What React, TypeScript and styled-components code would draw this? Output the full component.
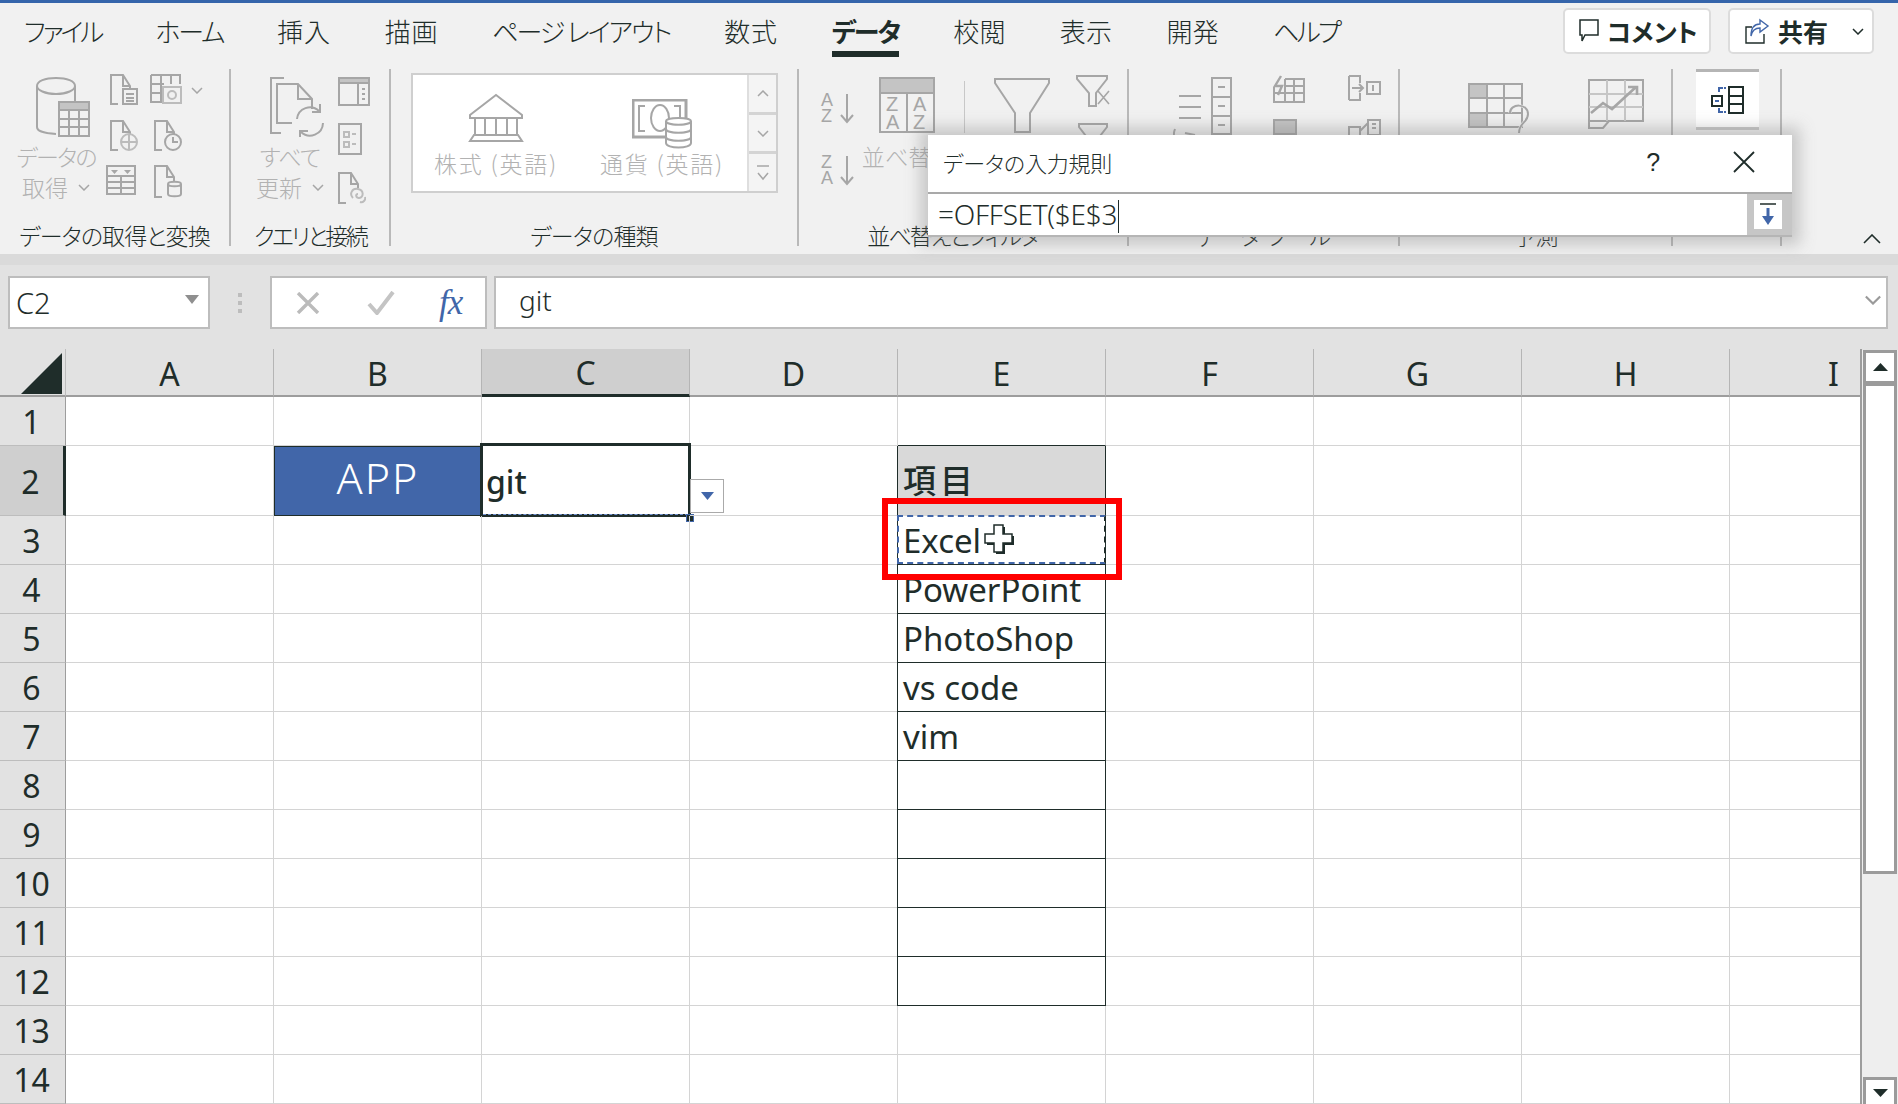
import React from "react";
import styled, { createGlobalStyle } from "styled-components";

const G = "#a6a6a6";
const DARK = "#1f2d2a";
const BLUE = "#4166a9";
const JP = `"Noto Sans CJK JP", "Noto Sans", sans-serif`;
const LATIN = `"Noto Sans", "Noto Sans CJK JP", sans-serif`;

const Global = createGlobalStyle`
  html, body { margin: 0; padding: 0; background: #fff; overflow: hidden; }
  #root { width: 1898px; height: 1104px; overflow: hidden; }
  * { box-sizing: border-box; }
`;

const Page = styled.div`
  position: relative;
  width: 1898px;
  height: 1104px;
  overflow: hidden;
  background: #e2e2e2;
  font-family: ${JP};
  font-feature-settings: "palt";
  color: ${DARK};
`;

const Ribbon = styled.header`
  height: 265px;
  background: #f1f1f1;
  border-top: 3px solid #3565ab;
  border-bottom: 11px solid #dadada;
`;

const TabRow = styled.nav`
  display: flex;
  align-items: flex-start;
  height: 66px;
  padding: 6px 24px 0 24px;
  gap: 54px;
`;

const Tab = styled.div<{ $active?: boolean; $ls: number }>`
  height: 48px;
  padding-top: 3px;
  line-height: 38px;
  font-size: 26px;
  letter-spacing: ${(p) => p.$ls}px;
  font-weight: ${(p) => (p.$active ? 700 : 300)};
  white-space: nowrap;
  border-bottom: 6px solid ${(p) => (p.$active ? DARK : "transparent")};
`;

const TabActions = styled.div`
  margin-left: auto;
  display: flex;
  gap: 17px;
  margin-top: -1px;
`;

const ActionButton = styled.button<{ $w: number }>`
  width: ${(p) => p.$w}px;
  height: 46px;
  display: flex;
  align-items: center;
  justify-content: flex-start;
  gap: 8px;
  background: #fff;
  border: 2px solid #dcdcdc;
  border-radius: 5px;
  font: 700 25px ${JP};
  font-feature-settings: "palt";
  color: ${DARK};
  padding: 0 0 0 14px;
`;

const ShareChevron = styled.span`
  margin-left: 16px;
`;

const Body = styled.div`
  display: flex;
  height: 185px;
`;

const Group = styled.section<{ $w: number }>`
  width: ${(p) => p.$w}px;
  height: 177px;
  border-right: 2px solid #b9b9b9;
  display: flex;
  flex-direction: column;
`;

const GroupContent = styled.div`
  display: flex;
  align-items: flex-start;
  height: 155px;
  overflow: hidden;
`;

const GroupLabel = styled.div<{ $ls?: number }>`
  height: 22px;
  line-height: 22px;
  text-align: center;
  font-size: 23px;
  font-weight: 300;
  letter-spacing: ${(p) => p.$ls ?? 0}px;
  white-space: nowrap;
`;

const Col = styled.div<{ $ml?: number; $w?: number; $pt?: number; $gap?: number; $center?: boolean }>`
  display: flex;
  flex-direction: column;
  flex: none;
  margin-left: ${(p) => p.$ml ?? 0}px;
  width: ${(p) => (p.$w ? `${p.$w}px` : "auto")};
  padding-top: ${(p) => p.$pt ?? 0}px;
  gap: ${(p) => p.$gap ?? 0}px;
  align-items: ${(p) => (p.$center ? "center" : "flex-start")};
`;

const BigIconSlot = styled.div`
  margin: 0 0 4px 14px;
`;

const InnerRule = styled.div`
  width: 1px;
  height: 52px;
  margin-top: 12px;
  background: #c8c8c8;
  flex: none;
`;

const FaintText = styled.div<{ $ls?: number; $mt?: number }>`
  color: #b2b2b2;
  font-size: 23px;
  font-weight: 300;
  line-height: 31px;
  letter-spacing: ${(p) => p.$ls ?? 0}px;
  margin-top: ${(p) => p.$mt ?? 0}px;
  white-space: nowrap;
  display: flex;
  align-items: center;
  gap: 10px;
`;

const SmallGrid = styled.div`
  display: grid;
  grid-template-columns: 44px 60px;
  grid-auto-rows: 45.5px;
  margin-left: 12px;
  padding-top: 5px;
`;

const SmallCell = styled.div<{ $in?: number }>`
  display: flex;
  align-items: flex-start;
  gap: 9px;
  padding-left: ${(p) => p.$in ?? 0}px;
`;

const LowChevron = styled.span`
  margin-top: 13px;
`;

const Gallery = styled.div`
  display: flex;
  width: 367px;
  height: 120px;
  margin: 4px 0 0 20px;
  background: #fff;
  border: 2px solid #cfcfcf;
`;

const GalleryItems = styled.div`
  display: flex;
  flex: 1;
`;

const GalleryItem = styled.div`
  width: 166px;
  display: flex;
  flex-direction: column;
  align-items: center;
`;

const GalleryIconSlot = styled.div<{ $pt: number }>`
  height: 70px;
  padding-top: ${(p) => p.$pt}px;
`;

const GalleryScroll = styled.div`
  width: 29px;
  display: flex;
  flex-direction: column;
  border-left: 2px solid #dedede;
`;

const GalleryArrow = styled.div`
  flex: 1;
  display: flex;
  align-items: center;
  justify-content: center;
  background: #f4f4f4;
  border-bottom: 3px solid #d4d4d4;
  &:last-child { border-bottom: 0; }
`;

const ActiveTool = styled.div`
  width: 63px;
  height: 61px;
  margin-left: 23px;
  background: #fff;
  border-top: 3px solid #b5b5b5;
  border-bottom: 3px solid #c8c8c8;
  display: flex;
  align-items: center;
  justify-content: center;
`;

const Collapse = styled.div`
  position: absolute;
  left: 1863px;
  top: 234px;
  line-height: 0;
`;

const Dialog = styled.div`
  position: absolute;
  left: 928px;
  top: 135px;
  width: 864px;
  height: 102px;
  background: #fff;
  box-shadow: 0 0 14px 8px rgba(120, 120, 120, 0.34);
  display: flex;
  flex-direction: column;
`;

const DialogHead = styled.div`
  height: 57px;
  display: flex;
  align-items: center;
  padding: 0 37px 3px 15px;
  font-size: 22px;
  font-weight: 300;
  letter-spacing: -0.2px;
`;

const DialogTitle = styled.div`
  flex: 1;
`;

const Help = styled.div`
  width: 20px;
  margin-right: 70px;
  text-align: center;
  font: 400 25px "Liberation Sans", sans-serif;
`;

const DialogInput = styled.div`
  flex: 1;
  display: flex;
  border-top: 2px solid #a9a9a9;
  border-bottom: 2px solid #b5b5b5;
`;

const InputText = styled.div`
  flex: 1;
  padding-left: 10px;
  font: 300 28px/41px ${LATIN};
  letter-spacing: -0.3px;
`;

const Caret = styled.span`
  display: inline-block;
  width: 1px;
  height: 33px;
  margin-left: 1px;
  background: ${DARK};
  vertical-align: -8px;
`;

const CollapseButton = styled.div`
  width: 45px;
  padding-right: 4px;
  background: #c6c6c6;
  display: flex;
  align-items: center;
  justify-content: center;
`;

const CollapseInner = styled.div`
  width: 28px;
  height: 29px;
  background: #fff;
  display: flex;
  align-items: center;
  justify-content: center;
`;

const FormulaBar = styled.div`
  display: flex;
  height: 84px;
  padding: 11px 10px 0 8px;
`;

const BarBox = styled.div`
  height: 53px;
  background: #fff;
  border: 2px solid #bdbdbd;
  display: flex;
  align-items: center;
`;

const NameBox = styled(BarBox)`
  width: 202px;
  padding: 0 14px 0 6px;
  justify-content: space-between;
  font: 300 29px ${LATIN};
`;

const NameArrow = styled.span`
  margin: -6px -5px 0 0;
`;

const Grip = styled.div`
  width: 60px;
  height: 53px;
  display: flex;
  align-items: center;
  justify-content: center;
`;

const FxBox = styled(BarBox)`
  width: 217px;
  margin-right: 7px;
  padding-left: 24px;
  gap: 47px;
`;

const Fx = styled.span`
  margin-left: -3px;
  color: ${BLUE};
  font: italic 400 35px "Liberation Serif", serif;
  letter-spacing: -1px;
`;

const FormulaBox = styled(BarBox)`
  flex: 1;
  padding: 0 4px 5px 23px;
  justify-content: space-between;
  font: 300 28px ${LATIN};
`;

const SheetArea = styled.div`
  display: flex;
  height: 755px;
`;

const Sheet = styled.div`
  width: 1862px;
  overflow: hidden;
  border-right: 2px solid #9d9d9d;
  display: grid;
  grid-template-columns: 66px repeat(9, 208px);
  grid-template-rows: 48px 49px 70px repeat(12, 49px);
  background: #fff;
`;

const Corner = styled.div`
  background: #e2e2e2;
  border-bottom: 2px solid #9d9d9d;
  border-right: 1px solid #bdbdbd;
  display: flex;
  align-items: flex-end;
  justify-content: flex-end;
  padding: 0 3px 1px 0;
`;

const ColHead = styled.div<{ $sel?: boolean }>`
  display: flex;
  align-items: center;
  justify-content: center;
  background: ${(p) => (p.$sel ? "#cfcfcf" : "#e2e2e2")};
  border-right: 1px solid #b5b5b5;
  border-bottom: ${(p) => (p.$sel ? `3px solid ${DARK}` : "2px solid #9d9d9d")};
  font: 400 32px ${LATIN};
  padding-top: 2px;
`;

const RowHead = styled.div<{ $sel?: boolean }>`
  display: flex;
  align-items: center;
  justify-content: center;
  background: ${(p) => (p.$sel ? "#cfcfcf" : "#e2e2e2")};
  border-right: ${(p) => (p.$sel ? `3px solid ${DARK}` : "1px solid #9d9d9d")};
  border-bottom: 1px solid #bdbdbd;
  font: 400 32px ${LATIN};
  padding: 1px 2px 0 0;
`;

const Cell = styled.div`
  position: relative;
  border-right: 1px solid #d4d4d4;
  border-bottom: 1px solid #d4d4d4;
`;

const TableCell = styled(Cell)<{ $head?: boolean }>`
  display: flex;
  align-items: center;
  margin-left: -1px;
  padding-left: 5px;
  padding-bottom: ${(p) => (p.$head ? 4 : 0)}px;
  background: ${(p) => (p.$head ? "#d9d9d9" : "#fff")};
  border-left: 1px solid ${DARK};
  border-right: 1px solid ${DARK};
  border-bottom: 1px solid ${(p) => (p.$head ? "#d9d9d9" : DARK)};
  font: ${(p) => (p.$head ? `500 33px ${JP}` : `400 33px ${LATIN}`)};
  letter-spacing: ${(p) => (p.$head ? "4px" : "0")};
`;

const TopEdgeCell = styled(Cell)`
  border-bottom: 1px solid ${DARK};
`;

const AppCell = styled(Cell)`
  display: flex;
  align-items: center;
  justify-content: center;
  background: ${BLUE};
  border: 1px solid ${DARK};
  color: #fff;
  font: 300 43px ${LATIN};
  letter-spacing: 2px;
  padding-bottom: 8px;
`;

const ActiveCell = styled(Cell)`
  display: flex;
  align-items: center;
  padding-left: 4px;
  padding-top: 2px;
  font: 500 32px ${LATIN};
`;

const Selection = styled.div`
  position: absolute;
  left: -2px;
  top: -3px;
  width: 211px;
  height: 74px;
  border: 3px solid ${DARK};
  pointer-events: none;
  &::after {
    content: "";
    position: absolute;
    left: 0;
    right: 0;
    bottom: -1px;
    border-top: 1px dashed #6f8fd0;
  }
`;

const Handle = styled.div`
  position: absolute;
  left: 204px;
  top: 68px;
  width: 8px;
  height: 8px;
  background: ${DARK};
  border: 1px solid ${BLUE};
`;

const DropButton = styled.div`
  position: absolute;
  left: 208px;
  top: 33px;
  width: 34px;
  height: 34px;
  background: #fff;
  border: 1px solid #aaa;
  display: flex;
  align-items: center;
  justify-content: center;
`;

const Ants = styled.div`
  position: absolute;
  inset: -1px -1px 0 -1px;
  border: 2px dashed ${BLUE};
  border-right-color: ${DARK};
`;

const RedBox = styled.div`
  position: absolute;
  left: -16px;
  top: -18px;
  width: 240px;
  height: 82px;
  border: 6px solid #ff0000;
  z-index: 3;
`;

const Pointer = styled.div`
  position: absolute;
  left: 86px;
  top: 8px;
  line-height: 0;
  z-index: 4;
`;

const ScrollBar = styled.aside`
  width: 36px;
  padding: 1px 0 0 1px;
  display: flex;
  flex-direction: column;
  background: linear-gradient(#e2e2e2 0 1px, #eeeeee 1px);
`;

const ScrollButton = styled.div`
  width: 34px;
  height: 34px;
  flex: none;
  background: #fff;
  border: 3px solid #9b9b9b;
  display: flex;
  align-items: center;
  justify-content: center;
`;

const ScrollThumb = styled.div`
  width: 34px;
  height: 491px;
  flex: none;
  margin-top: -1px;
  background: #fff;
  border: 3px solid #9b9b9b;
`;

const ScrollEnd = styled(ScrollButton)`
  margin-top: auto;
  height: 28px;
  margin-bottom: -1px;
  border-bottom: 0;
`;

/* ---------- icons ---------- */
type S = { w: number; h: number; children: React.ReactNode };
const Ico = ({ w, h, children }: S) => (
  <svg width={w} height={h} viewBox={`0 0 ${w} ${h}`} fill="none" stroke={G} strokeWidth={2} style={{ display: "block", flex: "none" }}>
    {children}
  </svg>
);

const Doc = ({ children, w = 28, h = 31 }: { children?: React.ReactNode; w?: number; h?: number }) => (
  <Ico w={w} h={h}>
    <path d={`M8 ${h - 1}H1V1H13L${w - 8} 12V${Math.min(h - 8, 16)}M13 1V12H${w - 8}`} />
    {children}
  </Ico>
);

const CylinderTable = () => (
  <Ico w={54} h={60}>
    <path d="M1 9C1 4 9 1 20 1S39 4 39 9V24M1 9V50C1 54 6 56 20 57M1 9C1 13 9 17 20 17S39 13 39 9" />
    <rect x="23" y="25" width="30" height="34" fill="#f1f1f1" />
    <rect x="23" y="25" width="30" height="8" fill="#c4c4c4" />
    <path d="M23 42H53M23 50H53M33 33V59M43 33V59" />
  </Ico>
);

const DocLines = () => (
  <Doc>
    <rect x="13" y="15" width="14" height="15" fill="#f1f1f1" />
    <path d="M16 20H24M16 24H24M16 27H24" />
  </Doc>
);

const TableCamera = () => (
  <Ico w={32} h={30}>
    <path d="M1 1H30V10M1 1V28H12M1 10H14M1 19H12M11 1V28M21 1V10" />
    <rect x="13" y="13" width="18" height="16" fill="#f1f1f1" stroke="#bcbcbc" />
    <circle cx="22" cy="21" r="4" stroke="#bcbcbc" />
  </Ico>
);

const Chevron = ({ w = 12, h = 7, c = G }: { w?: number; h?: number; c?: string }) => (
  <svg width={w} height={h} viewBox="0 0 12 7" fill="none" stroke={c} strokeWidth={1.5} style={{ display: "block", flex: "none" }}>
    <path d="M1 1L6 6L11 1" />
  </svg>
);

const DocGlobe = () => (
  <Doc>
    <circle cx="19" cy="22" r="8" fill="#f1f1f1" stroke="#bcbcbc" />
    <path d="M11 22H27M19 14V30" stroke="#bcbcbc" />
  </Doc>
);

const DocClock = () => (
  <Doc>
    <circle cx="19" cy="22" r="8" fill="#f1f1f1" />
    <path d="M19 17V22H24" />
  </Doc>
);

const TableFilter = () => (
  <Ico w={30} h={30}>
    <rect x="1" y="1" width="28" height="28" />
    <path d="M1 11H29M1 17H29M1 23H29M15 11V29" />
    <path d="M5 5H12L8.5 9ZM18 5H25L21.5 9Z" fill={G} stroke="none" />
  </Ico>
);

const DocCylinder = () => (
  <Doc h={33}>
    <path d="M14 19C14 16 27 16 27 19V29C27 32 14 32 14 29ZM14 19C14 22 27 22 27 19" fill="#f1f1f1" />
  </Doc>
);

const RefreshAll = () => (
  <Ico w={54} h={60}>
    <path d="M14 1H1V56H11" />
    <path d="M22 46H7V7H28L42 22V32M28 7V22H42" />
    <path d="M27 42A13 13 0 0 1 49 34M53 46A13 13 0 0 1 31 55" />
    <path d="M50 27V35H42M30 62V54H38" />
  </Ico>
);

const PanelTall = () => (
  <Ico w={32} h={29}>
    <rect x="1" y="1" width="30" height="27" />
    <rect x="1" y="1" width="30" height="5" fill="#c4c4c4" />
    <path d="M20 6V28M24 12H27M24 17H27M24 22H27" />
  </Ico>
);

const PanelList = () => (
  <Ico w={24} h={32}>
    <rect x="1" y="1" width="22" height="30" />
    <rect x="6" y="9" width="5" height="5" stroke="#bcbcbc" />
    <rect x="6" y="19" width="5" height="5" stroke="#bcbcbc" />
    <path d="M14 11H18M14 21H18" stroke="#bcbcbc" />
  </Ico>
);

const DocLink = () => (
  <Doc h={32}>
    <path d="M15 26C11 22 14 16 20 17C26 18 26 25 21 26C18 26 17 22 20 22M22 30C25 31 28 28 27 25" fill="none" stroke="#bcbcbc" />
  </Doc>
);

const Bank = () => (
  <Ico w={56} h={50}>
    <path d="M2 22L28 2L54 22V25H2Z" />
    <path d="M7 25V42M17 25V42M28 25V42M39 25V42M49 25V42" />
    <path d="M6 42H50L54 48H2Z" />
  </Ico>
);

const Currency = () => (
  <Ico w={60} h={50}>
    <rect x="1" y="1" width="53" height="37" strokeWidth={3} />
    <path d="M13 7H7V32H13M42 7H48V32H42" />
    <ellipse cx="28" cy="19" rx="9" ry="13" />
    <path d="M34 22C34 18 59 18 59 22V44C59 50 34 50 34 44Z" fill="#fff" />
    <path d="M34 22C34 27 59 27 59 22M34 30C34 35 59 35 59 30M34 38C34 43 59 43 59 38" />
  </Ico>
);

/* Two letters stacked beside an arrow, as the sort buttons draw them. */
const SortLetters = styled.div`
  display: flex;
  flex-direction: column;
  width: 16px;
  font: 400 18px/16px "Liberation Sans", sans-serif;
  color: ${G};
`;

const SortLetter = styled.div`
  height: 16px;
  line-height: 16px;
`;

const SortButton = styled.div`
  display: flex;
  align-items: flex-start;
  gap: 2px;
`;

const Sort = ({ top, bot }: { top: string; bot: string }) => (
  <SortButton>
    <SortLetters><SortLetter>{top}</SortLetter><SortLetter>{bot}</SortLetter></SortLetters>
    <Ico w={16} h={32}>
      <path d="M8 2V29M2 23L8 30L14 23" />
    </Ico>
  </SortButton>
);

const SortBig = () => (
  <Ico w={56} h={56}>
    <rect x="1" y="1" width="54" height="54" strokeWidth={2} />
    <rect x="1" y="1" width="54" height="15" fill="#c4c4c4" />
    <path d="M28 16V55" />
    <text x="7" y="34" fontSize="20" fontFamily="Liberation Sans" fill={G} stroke="none">Z</text>
    <text x="7" y="52" fontSize="20" fontFamily="Liberation Sans" fill={G} stroke="none">A</text>
    <text x="34" y="34" fontSize="20" fontFamily="Liberation Sans" fill={G} stroke="none">A</text>
    <text x="34" y="52" fontSize="20" fontFamily="Liberation Sans" fill={G} stroke="none">Z</text>
  </Ico>
);

const Funnel = () => (
  <Ico w={56} h={56}>
    <path d="M1 2H55V6L36 36V55H21V36L1 6Z" />
  </Ico>
);

const ClearFilter = () => (
  <Ico w={34} h={32}>
    <path d="M1 1H31V4L20 18V31H13V18L1 4Z" />
    <path d="M22 16L33 29M33 16L22 29" strokeWidth={1.6} />
  </Ico>
);

const Reapply = () => (
  <Ico w={34} h={14}>
    <path d="M3 1H31V4L24 13H10L3 4Z" />
  </Ico>
);

const TextColumns = () => (
  <Ico w={60} h={58}>
    <path d="M6 19H28M6 30H28M6 41H28" />
    <rect x="39" y="1" width="19" height="56" />
    <path d="M39 20H58M39 39H58" />
    <path d="M45 10H52M45 29H52M45 48H52" />
    <path d="M2 52C-2 62 6 70 16 70M12 56L22 58" />
  </Ico>
);

const FlashFill = () => (
  <Ico w={32} h={28}>
    <path d="M12 4H31V27H1V12M1 18H31M12 4V27M21 4V27M12 11H31" />
    <path d="M8 1L2 11H9L5 20" strokeWidth={2.4} />
  </Ico>
);

const DupRemove = () => (
  <Ico w={24} h={16}>
    <rect x="1" y="1" width="22" height="30" />
    <rect x="1" y="1" width="22" height="14" fill="#c4c4c4" />
  </Ico>
);

const ConsolidateTop = () => (
  <Ico w={33} h={26}>
    <path d="M1 1H12V8M1 25H12V18M1 1V25" />
    <path d="M4 13H15M11 9L15 13L11 17" />
    <rect x="19" y="7" width="13" height="12" />
    <path d="M25 10V16" />
  </Ico>
);

const ConsolidateBottom = () => (
  <Ico w={33} h={17}>
    <rect x="20" y="1" width="12" height="15" />
    <rect x="1" y="8" width="11" height="9" />
    <path d="M12 12L20 4M24 5H28M24 9H28" />
  </Ico>
);

const WhatIf = () => (
  <Ico w={62} h={60}>
    <rect x="1" y="1" width="53" height="43" />
    <rect x="1" y="1" width="18" height="14" fill="#c4c4c4" />
    <rect x="1" y="30" width="18" height="14" fill="#c4c4c4" />
    <path d="M19 1V44M36 1V44M1 15H54M1 30H54" />
    <path d="M42 30C42 20 60 20 60 31C60 40 51 39 51 50M51 54V59" strokeWidth={3} stroke="#f1f1f1" />
    <path d="M42 30C42 20 60 20 60 31C60 40 51 39 51 50M51 54V59" />
  </Ico>
);

const Forecast = () => (
  <Ico w={56} h={50}>
    <rect x="1" y="1" width="54" height="41" />
    <path d="M1 15H55M1 28H55M19 1V42M37 1V42" stroke="#c6c6c6" />
    <path d="M3 34L15 24L24 30L48 8M40 8H49V16" strokeWidth={2.6} />
    <path d="M1 42V49H15L21 42" />
  </Ico>
);

const OutlineIcon = () => (
  <svg width="34" height="28" viewBox="0 0 34 28" fill="none" strokeWidth={2} style={{ display: "block" }}>
    <path d="M12 2H8V6M12 26H8V22" stroke={BLUE} />
    <rect x="1" y="10" width="10" height="10" stroke={DARK} />
    <path d="M4 15H8" stroke={BLUE} />
    <rect x="18" y="1" width="14" height="26" stroke={DARK} />
    <path d="M18 10H32M18 18H32" stroke={DARK} />
    <path d="M13 2H15M13 26H15" stroke={BLUE} />
  </svg>
);

const CommentIcon = () => (
  <svg width="20" height="24" viewBox="0 0 20 24" fill="none" stroke={DARK} strokeWidth={1.5} style={{ display: "block" }}>
    <path d="M1 1H19V16H6L3 22V16H1Z" />
  </svg>
);

const ShareIcon = () => (
  <svg width="26" height="28" viewBox="0 0 26 28" fill="none" stroke={DARK} strokeWidth={1.4} style={{ display: "block" }}>
    <path d="M8 10H2V26H20V17" />
    <path d="M16 3L24 9L16 15V11C11 11 8 14 7 19C7 11 10 7 16 7Z" stroke={BLUE} />
  </svg>
);

const Tri = ({ w, h, c, up }: { w: number; h: number; c: string; up?: boolean }) => (
  <svg width={w} height={h} viewBox={`0 0 ${w} ${h}`} style={{ display: "block", flex: "none" }}>
    <path d={up ? `M0 ${h}H${w}L${w / 2} 0Z` : `M0 0H${w}L${w / 2} ${h}Z`} fill={c} />
  </svg>
);

/* ---------- data ---------- */
const tabs: { t: string; ls: number }[] = [
  { t: "ファイル", ls: -3.2 },
  { t: "ホーム", ls: -2.1 },
  { t: "挿入", ls: 0.7 },
  { t: "描画", ls: 0.7 },
  { t: "ページ レイアウト", ls: -2 },
  { t: "数式", ls: 0.7 },
  { t: "データ", ls: -2 },
  { t: "校閲", ls: 0.3 },
  { t: "表示", ls: 0.3 },
  { t: "開発", ls: 0.3 },
  { t: "ヘルプ", ls: -2.9 },
];
const cols = ["A", "B", "C", "D", "E", "F", "G", "H", "I"];
const rows = Array.from({ length: 14 }, (_, i) => i + 1);
const tableText: Record<number, string> = { 3: "Excel", 4: "PowerPoint", 5: "PhotoShop", 6: "vs code", 7: "vim" };

const renderCell = (r: number, c: string) => {
  const key = `${c}${r}`;
  if (key === "B2") return <AppCell key={key}>APP</AppCell>;
  if (key === "C2")
    return (
      <ActiveCell key={key}>
        git
        <Selection />
        <Handle />
        <DropButton><Tri w={13} h={8} c={BLUE} /></DropButton>
      </ActiveCell>
    );
  if (key === "E1") return <TopEdgeCell key={key} />;
  if (key === "E2") return <TableCell key={key} $head>項目</TableCell>;
  if (c === "E" && r >= 3 && r <= 12)
    return (
      <TableCell key={key}>
        {tableText[r]}
        {r === 3 && (
          <>
            <Ants />
            <RedBox />
            <Pointer>
              <svg width="32" height="32" viewBox="0 0 32 32">
                <path d="M12 3H21V12H30V21H21V30H12V21H3V12H12Z" fill={DARK} />
                <path d="M10 1H19V10H28V19H19V28H10V19H1V10H10Z" fill="#fff" stroke={DARK} strokeWidth={1.5} />
              </svg>
            </Pointer>
          </>
        )}
      </TableCell>
    );
  return <Cell key={key} />;
};

export default function App() {
  return (
    <Page>
      <Global />
      <Ribbon>
        <TabRow>
          {tabs.map(({ t, ls }) => (
            <Tab key={t} $ls={ls} $active={t === "データ"}>{t}</Tab>
          ))}
          <TabActions>
            <ActionButton $w={148}><CommentIcon />コメント</ActionButton>
            <ActionButton $w={146}><ShareIcon />共有<ShareChevron><Chevron c={DARK} /></ShareChevron></ActionButton>
          </TabActions>
        </TabRow>
        <Body>
          <Group $w={231}>
            <GroupContent>
              <Col $ml={18} $w={76} $pt={8} $center>
                <BigIconSlot><CylinderTable /></BigIconSlot>
                <FaintText $ls={-1.8}>データの</FaintText>
                <FaintText>取得<Chevron /></FaintText>
              </Col>
              <SmallGrid>
                <SmallCell $in={4}><DocLines /></SmallCell>
                <SmallCell><TableCamera /><LowChevron><Chevron /></LowChevron></SmallCell>
                <SmallCell $in={4}><DocGlobe /></SmallCell>
                <SmallCell $in={4}><DocClock /></SmallCell>
                <SmallCell><TableFilter /></SmallCell>
                <SmallCell $in={4}><DocCylinder /></SmallCell>
              </SmallGrid>
            </GroupContent>
            <GroupLabel $ls={-0.9}>データの取得と変換</GroupLabel>
          </Group>
          <Group $w={160}>
            <GroupContent>
              <Col $ml={24} $w={70} $pt={8} $center>
                <BigIconSlot><RefreshAll /></BigIconSlot>
                <FaintText $ls={-0.8}>すべて</FaintText>
                <FaintText>更新<Chevron /></FaintText>
              </Col>
              <Col $ml={13} $pt={8} $gap={17}>
                <PanelTall />
                <PanelList />
                <DocLink />
              </Col>
            </GroupContent>
            <GroupLabel $ls={-2.6}>クエリと接続</GroupLabel>
          </Group>
          <Group $w={408}>
            <GroupContent>
              <Gallery>
                <GalleryItems>
                  <GalleryItem>
                    <GalleryIconSlot $pt={18}><Bank /></GalleryIconSlot>
                    <FaintText $ls={1.8} $mt={3}>株式 (英語)</FaintText>
                  </GalleryItem>
                  <GalleryItem>
                    <GalleryIconSlot $pt={24}><Currency /></GalleryIconSlot>
                    <FaintText $ls={1.8} $mt={3}>通貨 (英語)</FaintText>
                  </GalleryItem>
                </GalleryItems>
                <GalleryScroll>
                  <GalleryArrow><svg width="12" height="7" viewBox="0 0 12 7" fill="none" stroke={G} strokeWidth={1.5}><path d="M1 6L6 1L11 6" /></svg></GalleryArrow>
                  <GalleryArrow><Chevron /></GalleryArrow>
                  <GalleryArrow>
                    <svg width="12" height="17" viewBox="0 0 12 17" fill="none" stroke={G} strokeWidth={1.5}><path d="M0 2H12M1 9L6 15L11 9" /></svg>
                  </GalleryArrow>
                </GalleryScroll>
              </Gallery>
            </GroupContent>
            <GroupLabel $ls={-0.8}>データの種類</GroupLabel>
          </Group>
          <Group $w={330}>
            <GroupContent>
              <Col $ml={22} $w={34} $pt={23} $gap={30}>
                <Sort top="A" bot="Z" />
                <Sort top="Z" bot="A" />
              </Col>
              <Col $ml={19} $w={66} $pt={8} $center>
                <SortBig />
                <FaintText $mt={8}>並べ替え</FaintText>
              </Col>
              <Col $ml={24} $w={1}><InnerRule /></Col>
              <Col $ml={29} $pt={8}><Funnel /></Col>
              <Col $ml={26} $pt={6} $gap={16}>
                <ClearFilter />
                <Reapply />
              </Col>
            </GroupContent>
            <GroupLabel $ls={-2}>並べ替えとフィルター</GroupLabel>
          </Group>
          <Group $w={271}>
            <GroupContent>
              <Col $ml={44} $pt={8}><TextColumns /></Col>
              <Col $ml={40} $pt={6} $gap={16}>
                <FlashFill />
                <DupRemove />
              </Col>
              <Col $ml={43} $pt={6} $gap={18}>
                <ConsolidateTop />
                <ConsolidateBottom />
              </Col>
            </GroupContent>
            <GroupLabel>データ ツール</GroupLabel>
          </Group>
          <Group $w={273}>
            <GroupContent>
              <Col $ml={68} $pt={14}><WhatIf /></Col>
              <Col $ml={58} $pt={10}><Forecast /></Col>
            </GroupContent>
            <GroupLabel>予測</GroupLabel>
          </Group>
          <Group $w={109}>
            <GroupContent>
              <ActiveTool><OutlineIcon /></ActiveTool>
            </GroupContent>
          </Group>
        </Body>
      </Ribbon>

      <Collapse>
        <svg width="18" height="10" viewBox="0 0 18 10" fill="none" stroke={DARK} strokeWidth={1.6}><path d="M1 9L9 1L17 9" /></svg>
      </Collapse>

      <Dialog>
        <DialogHead>
          <DialogTitle>データの入力規則</DialogTitle>
          <Help>?</Help>
          <svg width="22" height="22" viewBox="0 0 22 22" fill="none" stroke={DARK} strokeWidth={1.8}><path d="M1 1L21 21M21 1L1 21" /></svg>
        </DialogHead>
        <DialogInput>
          <InputText>=OFFSET($E$3<Caret /></InputText>
          <CollapseButton>
            <CollapseInner>
              <svg width="16" height="24" viewBox="0 0 16 24" fill="none">
                <path d="M0 1H16" stroke={DARK} strokeWidth={1.5} />
                <path d="M8 5V15" stroke={BLUE} strokeWidth={3} />
                <path d="M2 13H14L8 22Z" fill={BLUE} />
              </svg>
            </CollapseInner>
          </CollapseButton>
        </DialogInput>
      </Dialog>

      <FormulaBar>
        <NameBox>C2<NameArrow><Tri w={14} h={9} c="#8f8f8f" /></NameArrow></NameBox>
        <Grip>
          <svg width="5" height="20" viewBox="0 0 5 20" fill="#bdbdbd"><rect y="0" width="4" height="4" /><rect y="8" width="4" height="4" /><rect y="16" width="4" height="4" /></svg>
        </Grip>
        <FxBox>
          <svg width="24" height="22" viewBox="0 0 24 22" fill="none" stroke="#bbb" strokeWidth={3.4}><path d="M2 1L22 21M22 1L2 21" /></svg>
          <svg width="28" height="24" viewBox="0 0 28 24" fill="none" stroke="#c4c4c4" strokeWidth={4}><path d="M2 13L10 22L26 1" /></svg>
          <Fx>fx</Fx>
        </FxBox>
        <FormulaBox>git<Chevron w={18} h={10} c="#9a9a9a" /></FormulaBox>
      </FormulaBar>

      <SheetArea>
        <Sheet>
          <Corner>
            <svg width="41" height="41" viewBox="0 0 41 41" style={{ display: "block" }}><path d="M41 0V41H0Z" fill={DARK} /></svg>
          </Corner>
          {cols.map((c) => (
            <ColHead key={c} $sel={c === "C"}>{c}</ColHead>
          ))}
          {rows.map((r) => (
            <React.Fragment key={r}>
              <RowHead $sel={r === 2}>{r}</RowHead>
              {cols.map((c) => renderCell(r, c))}
            </React.Fragment>
          ))}
        </Sheet>
        <ScrollBar>
          <ScrollButton><Tri w={15} h={8} c={DARK} up /></ScrollButton>
          <ScrollThumb />
          <ScrollEnd><Tri w={15} h={8} c={DARK} /></ScrollEnd>
        </ScrollBar>
      </SheetArea>
    </Page>
  );
}
